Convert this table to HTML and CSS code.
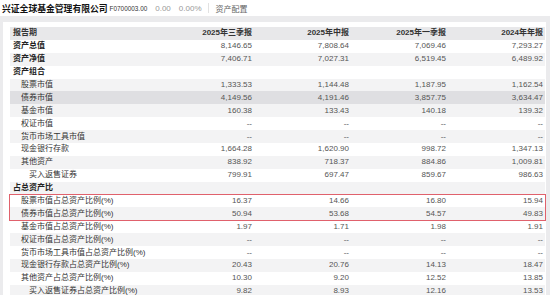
FILE: index.html
```html
<!DOCTYPE html>
<html lang="zh-CN">
<head>
  <meta charset="UTF-8" />
  <title>资产配置</title>
  <link rel="stylesheet" href="styles.css">
</head>
<body>
  <div class="topbar">
    <span class="fund-name">兴证全球基金管理有限公司</span>
    <span class="code">F0700003.00</span>
    <span class="quote">0.00</span>
    <span class="quote">0.00%</span>
    <span class="sep"></span>
    <span class="tab">资产配置</span>
  </div>

  <div class="panel">
    <div class="card">
      <table class="alloc">
        <colgroup>
          <col class="c-label"><col class="c-num"><col class="c-num"><col class="c-num"><col class="c-num">
        </colgroup>
        <thead>
          <tr><th>报告期</th><th>2025年三季报</th><th>2025年中报</th><th>2025年一季报</th><th>2024年年报</th></tr>
        </thead>
        <tbody>
          <tr class="top"><td>资产总值</td><td>8,146.65</td><td>7,808.64</td><td>7,069.46</td><td>7,293.27</td></tr>
          <tr class="top alt"><td>资产净值</td><td>7,406.71</td><td>7,027.31</td><td>6,519.45</td><td>6,489.92</td></tr>
          <tr class="group"><td colspan="5">资产组合</td></tr>
          <tr class="alt"><td class="l1">股票市值</td><td>1,333.53</td><td>1,144.48</td><td>1,187.95</td><td>1,162.54</td></tr>
          <tr class="hover"><td class="l1">债券市值</td><td>4,149.56</td><td>4,191.46</td><td>3,857.75</td><td>3,634.47</td></tr>
          <tr class="alt"><td class="l1">基金市值</td><td>160.38</td><td>133.43</td><td>140.18</td><td>139.32</td></tr>
          <tr><td class="l1">权证市值</td><td>--</td><td>--</td><td>--</td><td>--</td></tr>
          <tr class="alt"><td class="l1">货币市场工具市值</td><td>--</td><td>--</td><td>--</td><td>--</td></tr>
          <tr><td class="l1">现金银行存款</td><td>1,664.28</td><td>1,620.90</td><td>998.72</td><td>1,347.13</td></tr>
          <tr class="alt"><td class="l1">其他资产</td><td>838.92</td><td>718.37</td><td>884.86</td><td>1,009.81</td></tr>
          <tr><td class="l2">买入返售证券</td><td>799.91</td><td>697.47</td><td>859.67</td><td>986.63</td></tr>
          <tr class="group alt"><td colspan="5">占总资产比</td></tr>
        </tbody>
        <tbody class="marked">
          <tr><td class="l1">股票市值占总资产比例(%)</td><td>16.37</td><td>14.66</td><td>16.80</td><td>15.94</td></tr>
          <tr class="alt"><td class="l1">债券市值占总资产比例(%)</td><td>50.94</td><td>53.68</td><td>54.57</td><td>49.83</td></tr>
        </tbody>
        <tbody>
          <tr><td class="l1">基金市值占总资产比例(%)</td><td>1.97</td><td>1.71</td><td>1.98</td><td>1.91</td></tr>
          <tr class="alt"><td class="l1">权证市值占总资产比例(%)</td><td>--</td><td>--</td><td>--</td><td>--</td></tr>
          <tr><td class="l1">货币市场工具市值占总资产比例(%)</td><td>--</td><td>--</td><td>--</td><td>--</td></tr>
          <tr class="alt"><td class="l1">现金银行存款占总资产比例(%)</td><td>20.43</td><td>20.76</td><td>14.13</td><td>18.47</td></tr>
          <tr><td class="l1">其他资产占总资产比例(%)</td><td>10.30</td><td>9.20</td><td>12.52</td><td>13.85</td></tr>
          <tr class="alt"><td class="l2">买入返售证券占总资产比例(%)</td><td>9.82</td><td>8.93</td><td>12.16</td><td>13.53</td></tr>
        </tbody>
      </table>
    </div>
  </div>
</body>
</html>
```

FILE: styles.css
```css
* {
  margin: 0;
  padding: 0;
  box-sizing: border-box;
}
body {
  font-family: 'Liberation Sans', 'Noto Sans CJK SC', sans-serif;
  font-size: 8px;
  color: #333;
  background: #fff;
  overflow: hidden;
}
.topbar {
  display: flex;
  align-items: center;
  height: 16px;
  padding-left: 2px;
  white-space: nowrap;
}
.fund-name {
  font-size: 8.8px;
  font-weight: bold;
  color: #111;
}
.code {
  font-size: 6.4px;
  color: #333;
  margin-left: 2px;
}
.quote {
  color: #999;
  margin-left: 8px;
}
.sep {
  width: 1px;
  height: 10px;
  background: #e2e2e2;
  margin: 0 7px 0 6px;
}
.tab {
  color: #666;
}

.panel {
  background: #ebebed;
  padding: 6px 4px 0 3px;
  height: 279px;
}
.card {
  background: #fff;
  padding: 5px 0 0 7px;
  height: 100%;
}
.alloc {
  width: 535px;
  border-collapse: collapse;
  table-layout: fixed;
}
.c-label { width: 147px; }
.c-num { width: 97px; }
.alloc th,
.alloc td {
  height: 12.9px;
  line-height: 12px;
  padding: 0 2px 0 3px;
  white-space: nowrap;
  text-align: right;
  color: #555;
}
.alloc th:first-child,
.alloc td:first-child {
  text-align: left;
  color: #333;
}
.alloc thead tr {
  background: #e8e8ea;
}
.alloc th {
  font-weight: bold;
  color: #333;
}
.alloc tr.alt {
  background: #f3f3f4;
}
.alloc tr.hover {
  background: #dfdfe2;
}
.alloc tr.top td:first-child,
.alloc tr.group td {
  font-weight: bold;
  color: #222;
}
.alloc td.l1 {
  padding-left: 11px;
}
.alloc td.l2 {
  padding-left: 19px;
}
.alloc tbody.marked {
  outline: 1px solid #e0616c;
}
```
